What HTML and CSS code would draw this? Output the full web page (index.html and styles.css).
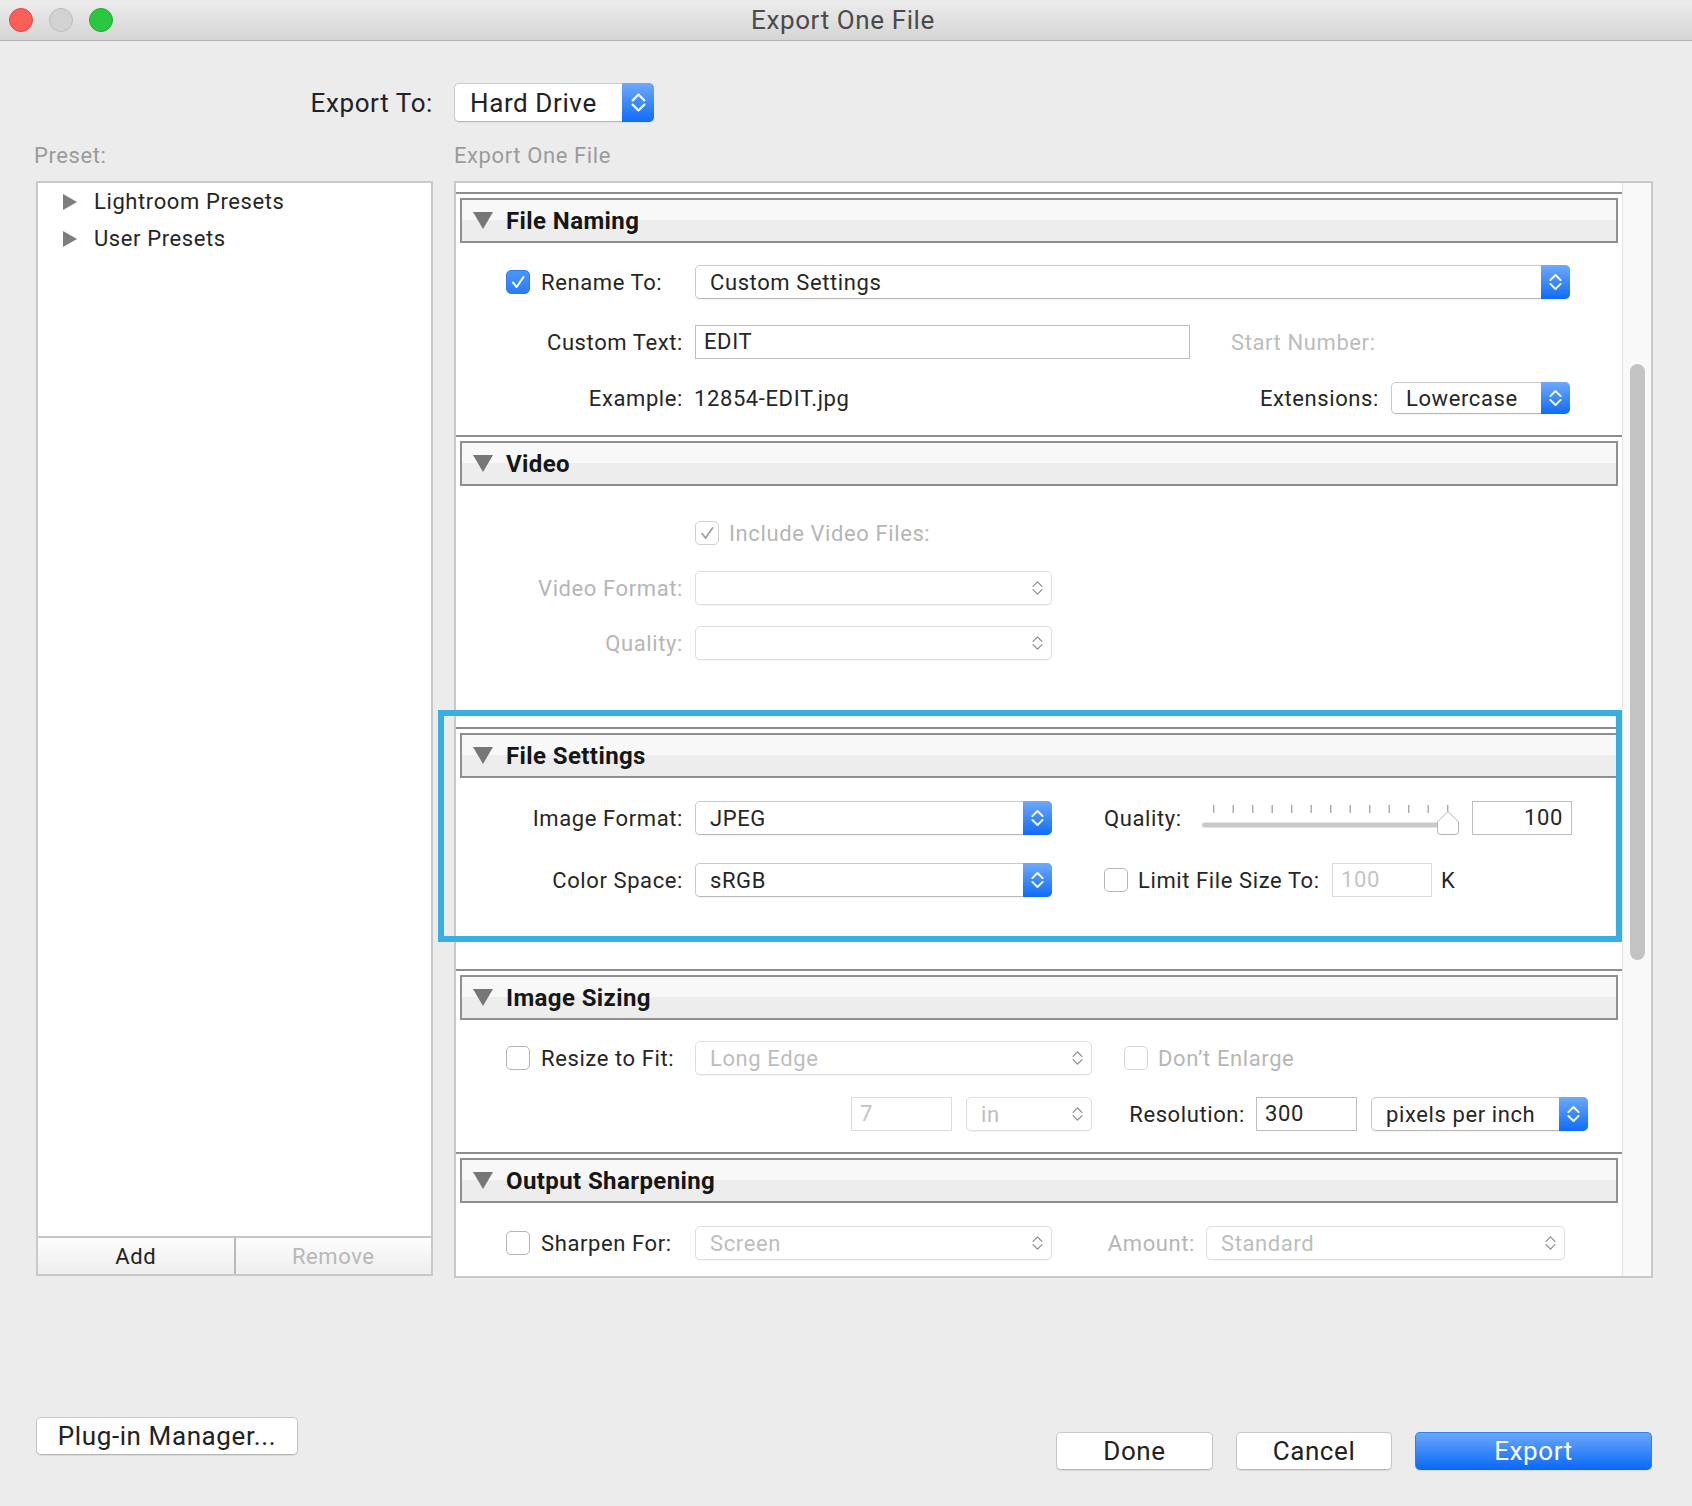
FILE: index.html
```html
<!DOCTYPE html>
<html>
<head>
<meta charset="utf-8">
<title>Export One File</title>
<link rel="stylesheet" href="styles.css">
</head>
<body>
<div class="titlebar">
  <div class="lights"><span class="light red"></span><span class="light gray"></span><span class="light green"></span></div>
  <div class="title">Export One File</div>
  <div></div>
</div>

<div class="main">
  <div class="row exportrow">
    <div class="export-label">Export To:</div>
    <div>
      <div class="popup big">
        <span class="ptext">Hard Drive</span>
        <span class="stepper"><svg viewBox="0 0 16 24"><polyline points="2.5,10 8,4.5 13.5,10"/><polyline points="2.5,14 8,19.5 13.5,14"/></svg></span>
      </div>
    </div>
  </div>

  <div class="row caprow">
    <div class="cap preset">Preset:</div>
    <div class="cap">Export One File</div>
  </div>

  <div class="row panels">
    <div class="leftpanel">
      <div class="tree">
        <div class="tnode"><svg class="tri-r" viewBox="0 0 14 16"><polygon points="0,0 14,8 0,16"/></svg><span>Lightroom Presets</span></div>
        <div class="tnode"><svg class="tri-r" viewBox="0 0 14 16"><polygon points="0,0 14,8 0,16"/></svg><span>User Presets</span></div>
      </div>
      <div class="addbar">
        <div class="abtn add">Add</div>
        <div class="abtn remove">Remove</div>
      </div>
    </div>

    <div class="rightcol">
      <div class="scrollbox">
        <div class="content">

          <div class="section">
            <div class="sec-head"><svg class="tri-d" viewBox="0 0 20 17"><polygon points="0,0 20,0 10,17"/></svg><span>File Naming</span></div>
            <div class="sec-body fn">
              <div class="frow">
                <div class="lab cbl"><span class="cb on"><svg viewBox="0 0 24 24"><polyline points="6.5,12.5 10.5,17.5 18,6.5"/></svg></span><span>Rename To:</span></div>
                <div class="popup w875 ml12"><span class="ptext">Custom Settings</span><span class="stepper"><svg viewBox="0 0 16 24"><polyline points="2.5,10 8,4.5 13.5,10"/><polyline points="2.5,14 8,19.5 13.5,14"/></svg></span></div>
              </div>
              <div class="frow nudge">
                <div class="lab">Custom Text:</div>
                <div class="field w495 ml12">EDIT</div>
                <div class="dim start-num">Start Number:</div>
              </div>
              <div class="frow padr">
                <div class="lab">Example:</div>
                <div class="example">12854-EDIT.jpg</div>
                <div class="ext-label">Extensions:</div>
                <div class="popup short w179 ml12"><span class="ptext">Lowercase</span><span class="stepper"><svg viewBox="0 0 16 24"><polyline points="2.5,10 8,4.5 13.5,10"/><polyline points="2.5,14 8,19.5 13.5,14"/></svg></span></div>
              </div>
            </div>
          </div>

          <div class="section">
            <div class="sec-head"><svg class="tri-d" viewBox="0 0 20 17"><polygon points="0,0 20,0 10,17"/></svg><span>Video</span></div>
            <div class="sec-body vid">
              <div class="frow">
                <div class="lab"></div>
                <span class="cb dis on ml12"><svg viewBox="0 0 24 24"><polyline points="6.5,12.5 10.5,17.5 18,6.5"/></svg></span>
                <span class="dim ml10">Include Video Files:</span>
              </div>
              <div class="frow">
                <div class="lab dim">Video Format:</div>
                <div class="popup dis w357 ml12"><span class="ptext"></span><span class="stepper"><svg viewBox="0 0 16 24"><polyline points="2.5,10 8,4.5 13.5,10"/><polyline points="2.5,14 8,19.5 13.5,14"/></svg></span></div>
              </div>
              <div class="frow">
                <div class="lab dim">Quality:</div>
                <div class="popup dis w357 ml12"><span class="ptext"></span><span class="stepper"><svg viewBox="0 0 16 24"><polyline points="2.5,10 8,4.5 13.5,10"/><polyline points="2.5,14 8,19.5 13.5,14"/></svg></span></div>
              </div>
            </div>
          </div>

          <div class="section">
            <div class="sec-head"><svg class="tri-d" viewBox="0 0 20 17"><polygon points="0,0 20,0 10,17"/></svg><span>File Settings</span></div>
            <div class="sec-body fs">
              <div class="frow">
                <div class="lab">Image Format:</div>
                <div class="popup w357 ml12"><span class="ptext">JPEG</span><span class="stepper"><svg viewBox="0 0 16 24"><polyline points="2.5,10 8,4.5 13.5,10"/><polyline points="2.5,14 8,19.5 13.5,14"/></svg></span></div>
                <div class="q-label">Quality:</div>
                <svg class="slider" viewBox="0 0 258 34" width="258" height="34">
                  <g class="ticks">
                    <rect x="11" y="4" width="1.4" height="8"/><rect x="30.5" y="4" width="1.4" height="8"/><rect x="50" y="4" width="1.4" height="8"/><rect x="69.5" y="4" width="1.4" height="8"/><rect x="89" y="4" width="1.4" height="8"/><rect x="108.5" y="4" width="1.4" height="8"/><rect x="128" y="4" width="1.4" height="8"/><rect x="147.5" y="4" width="1.4" height="8"/><rect x="167" y="4" width="1.4" height="8"/><rect x="186.5" y="4" width="1.4" height="8"/><rect x="206" y="4" width="1.4" height="8"/><rect x="225.5" y="4" width="1.4" height="8"/><rect x="245" y="4" width="1.4" height="8"/>
                  </g>
                  <rect class="track" x="0" y="21.5" width="250" height="5" rx="2.5"/>
                  <path class="thumb" d="M235.5,21 L246,10.5 L256.5,21 L256.5,30.5 Q256.5,33.5 253.5,33.5 L238.5,33.5 Q235.5,33.5 235.5,30.5 Z"/>
                </svg>
                <div class="field w100 ml12 right">100</div>
              </div>
              <div class="frow">
                <div class="lab">Color Space:</div>
                <div class="popup w357 ml12"><span class="ptext">sRGB</span><span class="stepper"><svg viewBox="0 0 16 24"><polyline points="2.5,10 8,4.5 13.5,10"/><polyline points="2.5,14 8,19.5 13.5,14"/></svg></span></div>
                <span class="cb ml52"></span>
                <span class="limit-label">Limit File Size To:</span>
                <div class="field dis w100">100</div>
                <span class="k">K</span>
              </div>
            </div>
          </div>

          <div class="section">
            <div class="sec-head"><svg class="tri-d" viewBox="0 0 20 17"><polygon points="0,0 20,0 10,17"/></svg><span>Image Sizing</span></div>
            <div class="sec-body is">
              <div class="frow">
                <div class="lab cbl"><span class="cb"></span><span>Resize to Fit:</span></div>
                <div class="popup dis w397 ml12"><span class="ptext">Long Edge</span><span class="stepper"><svg viewBox="0 0 16 24"><polyline points="2.5,10 8,4.5 13.5,10"/><polyline points="2.5,14 8,19.5 13.5,14"/></svg></span></div>
                <span class="cb dis ml32"></span>
                <span class="dim ml10">Don’t Enlarge</span>
              </div>
              <div class="frow">
                <div class="lab"></div>
                <div class="field dis w101 ml168">7</div>
                <div class="popup dis w126 ml14"><span class="ptext">in</span><span class="stepper"><svg viewBox="0 0 16 24"><polyline points="2.5,10 8,4.5 13.5,10"/><polyline points="2.5,14 8,19.5 13.5,14"/></svg></span></div>
                <div class="res-label">Resolution:</div>
                <div class="field w101 ml11">300</div>
                <div class="popup w217 ml14"><span class="ptext">pixels per inch</span><span class="stepper"><svg viewBox="0 0 16 24"><polyline points="2.5,10 8,4.5 13.5,10"/><polyline points="2.5,14 8,19.5 13.5,14"/></svg></span></div>
              </div>
            </div>
          </div>

          <div class="section">
            <div class="sec-head"><svg class="tri-d" viewBox="0 0 20 17"><polygon points="0,0 20,0 10,17"/></svg><span>Output Sharpening</span></div>
            <div class="sec-body os">
              <div class="frow">
                <div class="lab cbl"><span class="cb"></span><span>Sharpen For:</span></div>
                <div class="popup dis w357 ml12"><span class="ptext">Screen</span><span class="stepper"><svg viewBox="0 0 16 24"><polyline points="2.5,10 8,4.5 13.5,10"/><polyline points="2.5,14 8,19.5 13.5,14"/></svg></span></div>
                <div class="amt-label dim">Amount:</div>
                <div class="popup dis w359 ml11"><span class="ptext">Standard</span><span class="stepper"><svg viewBox="0 0 16 24"><polyline points="2.5,10 8,4.5 13.5,10"/><polyline points="2.5,14 8,19.5 13.5,14"/></svg></span></div>
              </div>
            </div>
          </div>

        </div>
        <div class="track-v"><div class="thumb-v"></div></div>
      </div>
      <div class="highlight"></div>
    </div>
  </div>

  <div class="footer">
    <div class="btn plug">Plug-in Manager...</div>
    <div class="btns">
      <div class="btn w157">Done</div>
      <div class="btn w156">Cancel</div>
      <div class="btn primary w237">Export</div>
    </div>
  </div>
</div>
</body>
</html>
```
FILE: styles.css
```css
* { box-sizing: border-box; }
html, body { margin: 0; padding: 0; }
body {
  width: 1692px;
  height: 1506px;
  overflow: hidden;
  background: #ececec;
  font-family: Roboto, "Liberation Sans", sans-serif;
  font-size: 22px;
  letter-spacing: 0.6px;
  color: #262626;
}

/* title bar */
.titlebar {
  height: 41px;
  background: linear-gradient(#ececec, #d5d5d5);
  border-bottom: 1px solid #b3b3b3;
  display: grid;
  grid-template-columns: 1fr auto 1fr;
  align-items: center;
}
.lights { display: flex; gap: 16px; padding-left: 9px; }
.light { width: 24px; height: 24px; border-radius: 50%; display: block; }
.light.red { background: #fc5f57; border: 1px solid #df4640; }
.light.gray { background: #d2d2d2; border: 1px solid #bdbdbd; }
.light.green { background: #29c840; border: 1px solid #1ead2b; }
.title { font-size: 26px; color: #4a4a4a; letter-spacing: 0.6px; padding-right: 6px; }

/* main layout */
.main { padding: 0 39px 0 36px; }
.row {
  display: grid;
  grid-template-columns: 397px 1199px;
  column-gap: 21px;
}
.exportrow { margin-top: 42px; height: 39px; align-items: center; }
.export-label { text-align: right; font-size: 26px; color: #222; }
.caprow { margin-top: 21px; height: 26px; line-height: 26px; }
.cap { color: #9b9b9b; font-size: 22px; }
.cap.preset { margin-left: -2px; }
.panels { margin-top: 12px; height: 1097px; }

/* popups */
.popup {
  display: flex;
  align-items: center;
  height: 34px;
  background: #fff;
  border: 1px solid #c9c9c9;
  border-bottom-color: #b9b9b9;
  border-radius: 5px;
  box-shadow: 0 1px 1px rgba(0,0,0,0.06);
  flex: none;
}
.popup .ptext { flex: 1; padding-left: 14px; white-space: nowrap; overflow: hidden; }
.popup .stepper {
  align-self: stretch;
  width: 29px;
  margin: -1px -1px -1px 0;
  border-radius: 0 5px 5px 0;
  background: linear-gradient(#6ea9fb, #0e6cf7);
  display: flex;
  align-items: center;
  justify-content: center;
}
.popup .stepper svg { width: 15px; height: 24px; }
.popup .stepper polyline { fill: none; stroke: #fff; stroke-width: 2; stroke-linecap: round; stroke-linejoin: round; }
.popup.big { height: 39px; width: 200px; font-size: 26px; color: #222; }
.popup.big .ptext { padding-left: 15px; }
.popup.big .stepper { width: 32px; }
.popup.big .stepper svg { width: 17px; height: 27px; }
.popup.short { height: 32px; }
.popup.dis { border-color: #dedede; box-shadow: 0 1px 1px rgba(0,0,0,0.04); color: #bdbdbd; }
.popup.dis .stepper { background: none; }
.popup.dis .stepper svg { width: 13px; height: 22px; }
.popup.dis .stepper polyline { stroke: #8f8f8f; stroke-width: 1.6; }

/* fields */
.field {
  height: 34px;
  border: 1px solid #bebebe;
  background: #fff;
  padding: 0 8px;
  line-height: 32px;
  flex: none;
}
.field.right { text-align: right; }
.field.dis { border-color: #dcdcdc; color: #c4c4c4; }

/* checkboxes */
.cb {
  width: 24px; height: 24px;
  border-radius: 5px;
  border: 1px solid #b4b4b4;
  background: #fff;
  display: flex;
  align-items: center;
  justify-content: center;
  flex: none;
}
.cb svg { width: 24px; height: 24px; }
.cb polyline { fill: none; stroke: #fff; stroke-width: 2.2; stroke-linecap: round; stroke-linejoin: round; }
.cb.on { background: linear-gradient(#4b95fa, #2b7cf4); border-color: #2f7ae8; }
.cb.dis { border-color: #d6d6d6; }
.cb.dis.on { background: #fff; border-color: #cfcfcf; }
.cb.dis.on polyline { stroke: #9c9c9c; stroke-width: 1.8; }

/* left panel */
.leftpanel {
  height: 1095px;
  background: #fff;
  border: 2px solid #c9c9c9;
  display: flex;
  flex-direction: column;
}
.tree { flex: 1; }
.tnode { height: 37px; display: flex; align-items: center; padding-left: 25px; gap: 17px; color: #262626; }
.tri-r { width: 14px; height: 16px; fill: #7d7d7d; flex: none; }
.addbar { height: 38px; display: flex; border-top: 2px solid #c6c6c6; }
.abtn {
  flex: 1;
  display: flex;
  align-items: center;
  justify-content: center;
  background: linear-gradient(#fdfdfd, #eeeeee);
}
.abtn.add { border-right: 2px solid #b9b9b9; color: #222; }
.abtn.remove { color: #b8b8b8; }

/* right panel */
.rightcol { position: relative; }
.scrollbox {
  height: 1097px;
  border: 2px solid #c9c9c9;
  background: #fff;
  display: flex;
  overflow: hidden;
}
.content { flex: 1; padding-top: 9px; min-width: 0; }
.track-v {
  width: 29px;
  flex: none;
  background: #f9f9f9;
  border-left: 1px solid #e5e5e5;
  padding: 181px 0 0 7px;
}
.thumb-v { width: 15px; height: 596px; background: #c3c3c3; border-radius: 8px; }

.section { border-top: 2px solid #8d8d8d; padding-top: 4px; }
.sec-head {
  height: 45px;
  margin: 0 4px;
  border: 2px solid #8f8f8f;
  background: linear-gradient(#f8f8f8 0, #f8f8f8 48%, #ededed 48%, #ededed 100%);
  display: flex;
  align-items: center;
  padding-left: 11px;
  gap: 13px;
  font-weight: 700;
  font-size: 24px;
  letter-spacing: 0.4px;
  color: #161616;
}
.tri-d { width: 20px; height: 17px; fill: #777; flex: none; }

.sec-body { display: flex; flex-direction: column; }
.sec-body.fn { height: 192px; padding-top: 22px; gap: 24px; }
.sec-body.vid { height: 241px; padding-top: 30px; gap: 21px; }
.sec-body.fs { height: 191px; padding-top: 23px; gap: 28px; }
.sec-body.is { height: 132px; padding-top: 21px; gap: 22px; }
.sec-body.os { height: 200px; padding-top: 23px; }

.frow { display: flex; align-items: center; height: 34px; white-space: nowrap; }
.frow.nudge { margin: 2px 0 -2px; }
.frow.padr { padding-right: 52px; }
.lab { width: 227px; flex: none; text-align: right; }
.lab.cbl { display: flex; align-items: center; justify-content: flex-start; padding-left: 50px; gap: 11px; text-align: left; }
.dim { color: #b6b6b6; }

.ml10 { margin-left: 10px; }
.ml11 { margin-left: 11px; }
.ml12 { margin-left: 12px; }
.ml14 { margin-left: 14px; }
.ml32 { margin-left: 32px; }
.ml52 { margin-left: 52px; }
.ml168 { margin-left: 168px; }

.w100 { width: 100px; }
.w101 { width: 101px; }
.w126 { width: 126px; }
.w179 { width: 179px; }
.w217 { width: 217px; }
.w357 { width: 357px; }
.w359 { width: 359px; }
.w397 { width: 397px; }
.w495 { width: 495px; }
.w875 { width: 875px; }

.start-num { margin-left: 41px; color: #bcbcbc; }
.example { margin-left: 11px; }
.ext-label { margin-left: auto; }

.q-label { margin-left: 52px; width: 98px; flex: none; }
.slider { flex: none; display: block; }
.slider .ticks rect { fill: #a8a8a8; }
.slider .track { fill: #c9c9c9; }
.slider .thumb { fill: #fff; stroke: #b3b3b3; stroke-width: 1; }

.limit-label { margin-left: 10px; width: 194px; flex: none; }
.k { margin-left: 9px; }
.res-label { width: 153px; flex: none; text-align: right; }
.amt-label { width: 143px; flex: none; text-align: right; }

.highlight {
  position: absolute;
  left: -16px;
  top: 529px;
  width: 1184px;
  height: 232px;
  border: 6px solid #39afe1;
  pointer-events: none;
}

/* footer */
.footer { display: flex; align-items: flex-start; margin-top: 139px; }
.btn {
  height: 38px;
  background: #fff;
  border: 1px solid #c6c6c6;
  border-bottom-color: #b5b5b5;
  border-radius: 5px;
  box-shadow: 0 1px 1px rgba(0,0,0,0.08);
  display: flex;
  align-items: center;
  justify-content: center;
  font-size: 26px;
  color: #222;
  flex: none;
}
.btn.plug { width: 262px; }
.btns { margin-left: auto; margin-top: 15px; display: flex; gap: 23px; margin-right: 1px; }
.w156 { width: 156px; }
.w157 { width: 157px; }
.w237 { width: 237px; }
.btn.primary {
  background: linear-gradient(#6aa7fb, #0b6af7);
  border-color: #2f7df0;
  border-bottom-color: #1c66dc;
  color: #fff;
}
```
